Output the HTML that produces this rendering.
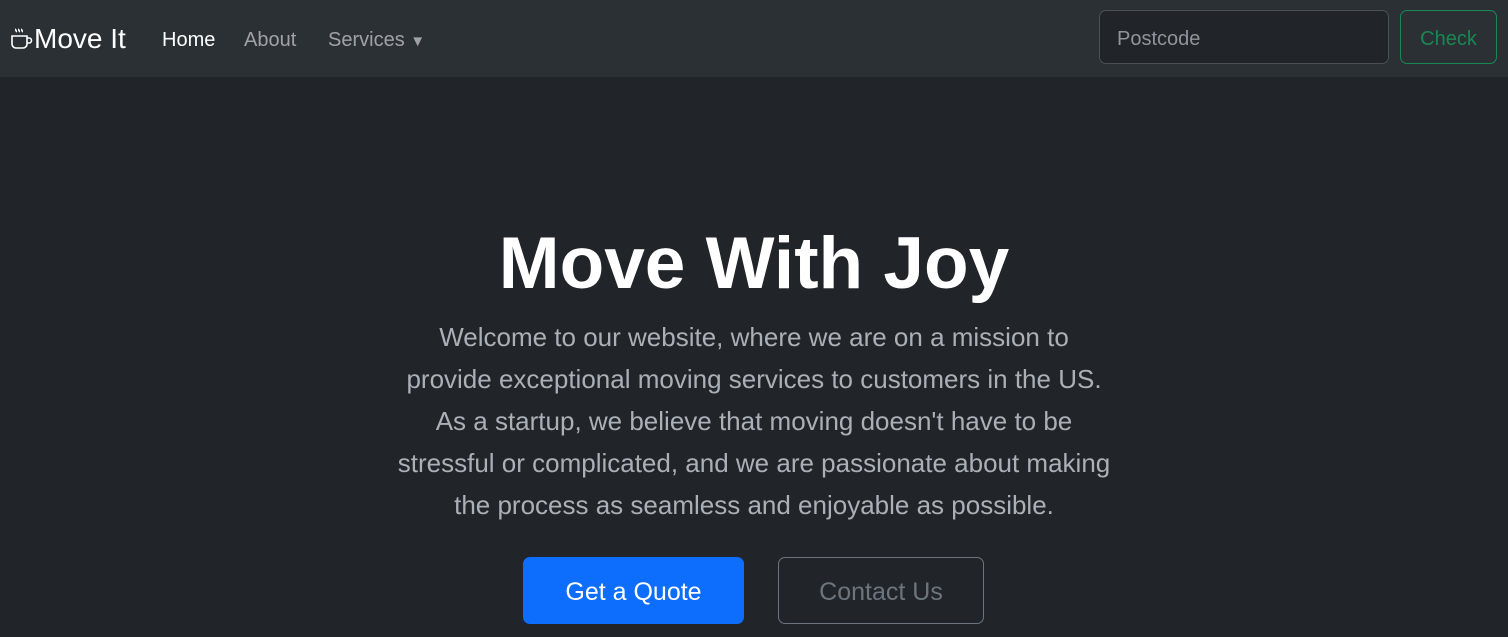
<!DOCTYPE html>
<html><head><style>
*{margin:0;padding:0;box-sizing:border-box}
body{width:1508px;height:637px;background:#212529;font-family:"Liberation Sans",sans-serif;overflow:hidden;position:relative}
nav{height:77px;background:#2b3035;position:relative}
.brand{position:absolute;left:10px;top:23px;color:#fff;font-size:28px;display:flex;align-items:center}
.nl{position:absolute;top:29px;font-size:20px;color:rgba(255,255,255,.55)}
.inp{position:absolute;left:1099px;top:10px;width:290px;height:54px;border:1px solid #495057;border-radius:7px;background:#212529;color:#8f959b;font-size:20px;padding:17px 17px}
.chk{position:absolute;left:1400px;top:10px;width:97px;height:54px;border:1px solid #198754;border-radius:7px;color:#198754;font-size:20px;text-align:center;line-height:56px}
h1{position:absolute;top:222px;left:0;width:1508px;text-align:center;color:#fff;font-size:73px;font-weight:bold}
p{position:absolute;top:316px;left:0;width:1508px;text-align:center;color:#aab0b6;font-size:26px;line-height:42px}
.b1{position:absolute;left:523px;top:557px;width:221px;height:67px;background:#0d6efd;border-radius:7px;color:#fff;font-size:25px;text-align:center;line-height:71px}
.b2{position:absolute;left:778px;top:557px;width:206px;height:67px;border:1px solid #6c757d;border-radius:7px;color:#6c757d;font-size:25px;text-align:center;line-height:69px}
</style></head><body>
<nav>
<div class="brand"><svg width="24" height="26" viewBox="0 0 24 26" fill="none" stroke="#fff" stroke-width="1.6"><path d="M6 3c-1 1 1 2 0 3M9 3c-1 1 1 2 0 3M12 3c-1 1 1 2 0 3"/><path d="M2 10h15v8a4 4 0 0 1-4 4H6a4 4 0 0 1-4-4z"/><path d="M17 12h2a2 2 0 0 1 0 5h-2"/></svg>Move It</div>
<span class="nl" style="left:162px;color:#fff">Home</span>
<span class="nl" style="left:244px">About</span>
<span class="nl" style="left:328px">Services <span style="font-size:15px">▼</span></span>
<div class="inp">Postcode</div>
<div class="chk">Check</div>
</nav>
<h1>Move With Joy</h1>
<p>Welcome to our website, where we are on a mission to<br>provide exceptional moving services to customers in the US.<br>As a startup, we believe that moving doesn't have to be<br>stressful or complicated, and we are passionate about making<br>the process as seamless and enjoyable as possible.</p>
<div class="b1">Get a Quote</div>
<div class="b2">Contact Us</div>
</body></html>
